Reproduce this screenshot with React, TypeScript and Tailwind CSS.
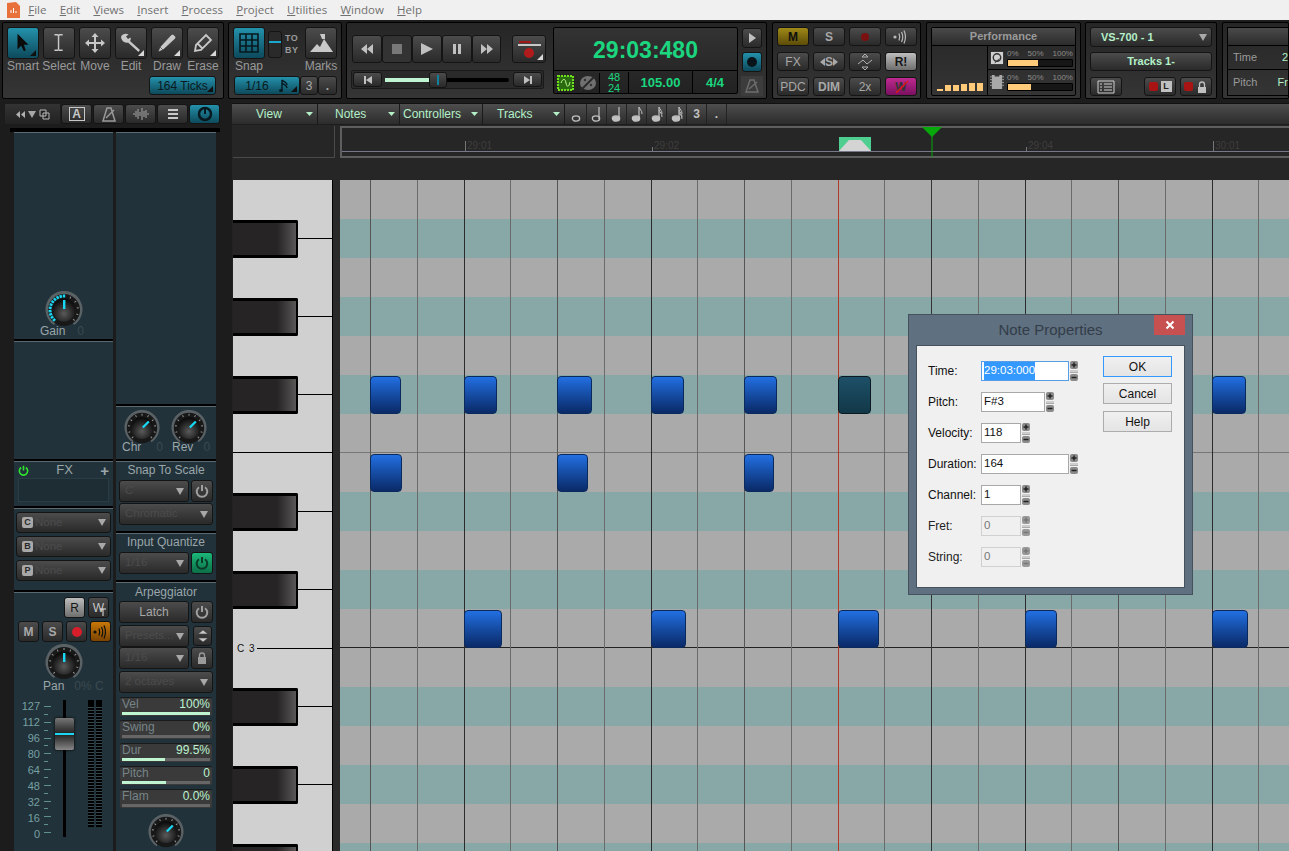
import React from "react";

type P = { className?: string; children?: React.ReactNode };

const Corner = ({ light }: { light?: boolean }) => (
  <svg className="absolute bottom-[2px] right-[2px]" width="6" height="6" viewBox="0 0 6 6">
    <path d="M6 0V6H0Z" fill={light ? "#d8d8d8" : "#101010"} />
  </svg>
);

const Btn = ({ className = "", children, v = "gray", between }: P & { v?: string; between?: boolean }) => {
  const look =
    v === "teal"
      ? "bg-gradient-to-b from-[#2492ac] to-[#0d4a5c] text-[#0a1a20]"
      : v === "flat"
      ? "bg-[#333333] text-[#9a9a9a]"
      : v === "gold"
      ? "bg-gradient-to-b from-[#a08a18] to-[#5c4c08] text-[#101010]"
      : v === "light"
      ? "bg-gradient-to-b from-[#bdbdbd] to-[#6f6f6f] text-[#161616]"
      : v === "pink"
      ? "bg-gradient-to-b from-[#c02a90] to-[#7a1060] text-[#333333]"
      : v === "green"
      ? "bg-gradient-to-b from-[#1cb878] to-[#0b7048] text-[#0a3a28]"
      : v === "orange"
      ? "bg-gradient-to-b from-[#c87808] to-[#7c4400] text-[#101010]"
      : "bg-gradient-to-b from-[#4c4c4c] to-[#2a2a2a] text-[#a8a8a8]";
  return (
    <div className={`relative flex shrink-0 items-center rounded-[3px] border border-[#141414] ${between ? "justify-between" : "justify-center"} ${look} ${className}`}>
      {children}
    </div>
  );
};

const Ico = ({ children, s = 24, vb = 24, className = "" }: P & { s?: number; vb?: number }) => (
  <svg width={s} height={s} viewBox={`0 0 ${vb} ${vb}`} className={className}>
    {children}
  </svg>
);

const Label = ({ children, className = "" }: P) => (
  <div className={`text-center text-[12px] leading-[14px] text-[#9a9a9a] ${className}`}>{children}</div>
);

const Tool = ({ label, v, corner, children }: { label: string; v?: string; corner?: boolean; children: React.ReactNode }) => (
  <div className="flex w-[36px] shrink-0 flex-col items-center">
    <Btn v={v} className="h-[32px] w-[32px]">
      {children}
      {corner && <Corner light={v !== "teal"} />}
    </Btn>
    <Label className="whitespace-nowrap">{label}</Label>
  </div>
);

const Panel = ({ className = "", children }: P) => (
  <div className={`shrink-0 rounded-[2px] border border-black bg-gradient-to-b from-[#262626] to-[#353535] ${className}`}>{children}</div>
);

const Chevron = ({ c = "#a8a8a8" }: { c?: string }) => (
  <svg width="8" height="7" viewBox="0 0 8 7">
    <path d="M0 0H8L4 7Z" fill={c} />
  </svg>
);

const Knob = ({ rot = 0, dots = false, size = 38 }: { rot?: number; dots?: boolean; size?: number }) => {
  const ticks = Array.from({ length: 11 }, (_, i) => -135 + i * 27);
  const lit = Array.from({ length: 11 }, (_, i) => -135 + i * 13.5);
  return (
    <svg width={size} height={size} viewBox="0 0 38 38" className="shrink-0">
      <defs>
        <radialGradient id="kb" cx="50%" cy="65%" r="60%">
          <stop offset="0%" stopColor="#5a5a5a" />
          <stop offset="60%" stopColor="#2a2a2a" />
          <stop offset="100%" stopColor="#0c0c0c" />
        </radialGradient>
      </defs>
      <path d="M9 34A18.5 18.5 0 1 1 29 34L26 29H12Z" fill="#5a6266" />
      <circle cx="19" cy="19" r="16" fill="#181818" />
      {ticks.map((a) => (
        <rect key={a} x="18.5" y="4" width="1" height="2" fill="#9a9a9a" transform={`rotate(${a} 19 19)`} />
      ))}
      {dots &&
        lit.map((a) => (
          <rect key={a} x="17.8" y="3.5" width="2.4" height="3" fill="#19d6f2" transform={`rotate(${a} 19 19)`} />
        ))}
      <circle cx="19" cy="19" r="11.5" fill="url(#kb)" />
      <rect x="18" y="9" width="2.4" height="9" fill="#19d6f2" transform={`rotate(${rot} 19 19)`} />
    </svg>
  );
};

const Section = ({ className = "", children }: P) => (
  <div className={`border-b-2 border-t border-b-black border-t-[#5b6a70] bg-[#22323a] ${className}`}>{children}</div>
);

const Drop = ({ text, className = "", c = "#4c4c4c", badge }: { text: string; className?: string; c?: string; badge?: string }) => (
  <Btn between className={`pl-[5px] pr-[4px] ${className}`}>
    <span className="flex items-center gap-[2px] whitespace-nowrap">
      {badge && <span className="flex h-[11px] w-[11px] shrink-0 items-center justify-center rounded-[2px] bg-[#a8a8a8] text-[9px] font-bold text-[#2a2a2a]">{badge}</span>}
      <span className="text-[11.5px]" style={{ color: c }}>{text}</span>
    </span>
    <span className="shrink-0"><Chevron /></span>
  </Btn>
);

const Power = ({ c = "#a0a0a0", s = 14 }: { c?: string; s?: number }) => (
  <svg width={s} height={s} viewBox="0 0 14 14" fill="none" stroke={c} strokeWidth="2">
    <path d="M4 3.2A5.3 5.3 0 1 0 10 3.2" />
    <path d="M7 1V7" />
  </svg>
);

const Broadcast = ({ c = "#b8b8b8" }: { c?: string }) => (
  <svg width="18" height="16" viewBox="0 0 18 16" fill="none" stroke={c} strokeWidth="1.2">
    <circle cx="3" cy="8" r="1.6" fill={c} stroke="none" />
    <path d="M7 4.5C8 7 8 9 7 11.5M9.5 3C11 6 11 10 9.5 13M12 1.5C14 6 14 10 12 14.5" />
  </svg>
);

const Row = ({ name, val, pct }: { name: string; val: string; pct: number }) => (
  <div className="flex h-[19px] w-[92px] flex-col justify-between rounded-[2px] border-t border-[#1a1a1a] bg-[#3a3a3a] px-[2px]">
    <div className="flex items-center justify-between text-[12px] leading-[13px]">
      <span className="text-[#768488]">{name}</span>
      <span className="text-[#bdf3d0]">{val}</span>
    </div>
    <div className="mb-[1px] h-[3px] bg-[#666666]">
      <div className="h-full bg-[#c0f5d2]" style={{ width: `${pct}%` }} />
    </div>
  </div>
);

const Note = ({ kind }: { kind: number }) => (
  <svg width="12" height="16" viewBox="0 0 12 16">
    {kind > 0 && <path d="M8 1V13" stroke="#c0c0c0" strokeWidth="1.2" />}
    <ellipse cx="5" cy="12.5" rx="3.6" ry="2.6" fill={kind >= 2 ? "#c0c0c0" : "none"} stroke="#c0c0c0" strokeWidth="1.4" />
    {kind >= 3 && <path d="M8 1C9 4 11 4 11 8" fill="none" stroke="#c0c0c0" />}
    {kind >= 4 && <path d="M8 4C9 7 11 7 11 11" fill="none" stroke="#c0c0c0" />}
    {kind >= 5 && <path d="M8 6.5C9 9 11 9 11 13" fill="none" stroke="#c0c0c0" />}
  </svg>
);

const Toolbar = () => (
  <div className="flex h-[80px] gap-[4px] bg-[#1d1d1d] pl-[2px] pt-[2px]">
    <Panel className="h-[77px] w-[222px] px-[2px] pt-[4px]">
      <div className="flex">
        <Tool label="Smart" v="teal" corner>
          <Ico s={22}><path d="M6 2V19L10 15L13 21L15 20L13 14H18Z" fill="#0b0b0b" /></Ico>
        </Tool>
        <Tool label="Select">
          <Ico s={22}><path d="M7 3H10.5L11.5 4L12.5 3H16M7 20H10.5L11.5 19L12.5 20H16M11.5 4V19" stroke="#c8c8c8" strokeWidth="1.6" fill="none" /></Ico>
        </Tool>
        <Tool label="Move">
          <Ico s={24}><path d="M12 2L15.5 6H13V11H18V8.5L22 12L18 15.5V13H13V18H15.5L12 22L8.5 18H11V13H6V15.5L2 12L6 8.5V11H11V6H8.5Z" fill="#c8c8c8" /></Ico>
        </Tool>
        <Tool label="Edit" corner>
          <Ico s={24}><path d="M2 6C3 3 7 2 9.5 3.5L7 5.5L9 8L11.5 6.5C12 8 11.8 9 11 10L21 19L19.5 21L9 11.5C6 12.5 2.5 10 2 6Z" fill="#c8c8c8" /></Ico>
        </Tool>
        <Tool label="Draw" corner>
          <Ico s={24}><path d="M3 21L5 16L16 4C17 3 18 3 19 4L20 5C21 6 21 7 20 8L8 19ZM5 16L8 19" fill="#c8c8c8" stroke="#2a2a2a" strokeWidth="0.6" /></Ico>
        </Tool>
        <Tool label="Erase" corner>
          <Ico s={24}><path d="M4 20L5 14L15 4L20 9L10 19ZM7 13L11 17" fill="none" stroke="#c8c8c8" strokeWidth="1.8" /></Ico>
        </Tool>
      </div>
      <div className="mt-[3px] flex justify-end pr-[5px]">
        <Btn v="teal" className="h-[19px] w-[67px] text-[12px]">
          164 Ticks
          <Corner />
        </Btn>
      </div>
    </Panel>
    <Panel className="h-[77px] w-[114px] px-[4px] pt-[4px]">
      <div className="flex">
        <div className="flex w-[32px] flex-col items-center">
          <Btn v="teal" className="h-[32px] w-[32px]">
            <Ico s={22} vb={22}><path d="M2 2H20V20H2ZM8 2V20M14 2V20M2 8H20M2 14H20" fill="none" stroke="#07181e" strokeWidth="1.6" /></Ico>
          </Btn>
          <Label>Snap</Label>
        </div>
        <div className="ml-[3px] mt-[4px] flex h-[27px] w-[14px] flex-col overflow-hidden rounded-[3px] border border-[#141414] bg-[#2a2a2a] pt-[9px]">
          <div className="h-[2px] bg-[#18a8d0]" />
        </div>
        <div className="ml-[3px] mt-[6px] flex w-[20px] flex-col gap-[2px] text-[9px] font-bold leading-[10px] tracking-[0.5px] text-[#9a9a9a]">
          <span>TO</span>
          <span>BY</span>
        </div>
        <div className="flex w-[32px] flex-col items-center">
          <Btn className="h-[32px] w-[32px]">
            <Ico s={28} vb={28}><path d="M3 23L10 15L13 18L17 10L26 23Z" fill="#c8c8c8" /><path d="M13 5H18V10H15Z" fill="#c8c8c8" /></Ico>
          </Btn>
          <Label>Marks</Label>
        </div>
      </div>
      <div className="mt-[3px] flex pl-[1px]">
        <Btn v="teal" className="h-[19px] w-[66px] gap-[10px] text-[12px]">
          1/16
          <svg width="10" height="14" viewBox="0 0 10 14"><path d="M3 1V11M3 1C5 3 8 3 8 6M3 4C5 6 8 6 8 9" fill="none" stroke="#07181e" strokeWidth="1.4" /><ellipse cx="2" cy="11.5" rx="2" ry="1.6" fill="#07181e" /></svg>
          <Corner />
        </Btn>
        <Btn className="h-[19px] w-[18px] text-[12px]">3</Btn>
        <Btn className="h-[19px] w-[19px] text-[12px] font-bold">.</Btn>
      </div>
    </Panel>
    <Panel className="flex h-[77px] w-[421px] pl-[5px] pt-[4px]">
      <div className="w-[197px]">
        <div className="mt-[8px] flex">
          <Btn className="h-[28px] w-[30px]"><Ico s={14} vb={14}><path d="M7 2V12L1 7ZM13 2V12L7 7Z" fill="#c0c0c0" /></Ico></Btn>
          <Btn v="flat" className="h-[28px] w-[30px]"><div className="h-[10px] w-[10px] bg-[#787878]" /></Btn>
          <Btn className="h-[28px] w-[30px]"><Ico s={16} vb={16}><path d="M2 2L14 8L2 14Z" fill="#c0c0c0" /></Ico></Btn>
          <Btn className="h-[28px] w-[30px]"><Ico s={14} vb={14}><path d="M3 2H6V12H3ZM8 2H11V12H8Z" fill="#c0c0c0" /></Ico></Btn>
          <Btn className="h-[28px] w-[29px]"><Ico s={14} vb={14}><path d="M1 2L7 7L1 12ZM7 2L13 7L7 12Z" fill="#c0c0c0" /></Ico></Btn>
          <Btn className="ml-[11px] h-[28px] w-[34px] flex-col">
            <div className="mb-[1px] mr-[9px] h-[2px] w-[12px] bg-[#a01818]" />
            <div className="mb-[2px] h-[2px] w-[23px] bg-[#c8c8c8]" />
            <div className="h-[10px] w-[10px] rounded-full bg-[#b01c1c]" />
            <Corner light />
          </Btn>
        </div>
        <div className="ml-[-1px] mt-[7px] flex h-[19px] w-[193px] items-center rounded-[2px] border border-[#1a1a1a] bg-[#2a2a2a] px-[1px]">
          <Btn className="h-[15px] w-[29px]"><Ico s={10} vb={10}><path d="M1 1H3V9H1ZM9 1V9L3 5Z" fill="#c0c0c0" /></Ico></Btn>
          <div className="ml-[3px] flex h-[4px] w-[124px] items-center rounded-full bg-black">
            <div className="h-full w-[44px] bg-[#bff5d2]" />
            <Btn className="h-[16px] w-[18px]"><div className="h-[10px] w-[2px] bg-[#10809c]" /></Btn>
          </div>
          <Btn className="ml-[4px] h-[15px] w-[29px]"><Ico s={10} vb={10}><path d="M1 1V9L7 5ZM7 1H9V9H7Z" fill="#c0c0c0" /></Ico></Btn>
        </div>
      </div>
      <div className="ml-[4px] h-[67px] w-[185px] shrink-0 rounded-[2px] border border-black bg-gradient-to-b from-[#333333] to-[#222222] text-[#1bd67f]">
        <div className="flex h-[42px] items-center justify-center pt-[2px] text-[23px] font-bold leading-none">29:03:480</div>
        <div className="flex h-[24px] items-center border-t border-black">
          <div className="flex w-[46px] items-center justify-center gap-[2px] border-r border-black">
            <Ico s={20} vb={20}><rect x="2" y="3" width="15" height="14" fill="#2a6a10" stroke="#6fe01c" strokeWidth="2" strokeDasharray="2 1" /><path d="M5 10C7 5 9 5 10 10S13 14 14 9" fill="none" stroke="#c0ff90" /></Ico>
            <Ico s={20} vb={20}><ellipse cx="10" cy="10" rx="8" ry="7" fill="#707070" /><path d="M2 18L18 2" stroke="#2a2a2a" strokeWidth="2" /><circle cx="7" cy="7" r="1.2" fill="#333" /><circle cx="13" cy="12" r="1.2" fill="#333" /></Ico>
          </div>
          <div className="flex w-[29px] flex-col items-center border-r border-black text-[11px] leading-[11px]">
            <span>48</span>
            <span>24</span>
          </div>
          <div className="flex h-[23px] w-[64px] items-center justify-center border-r border-black text-[13px] font-bold">105.00</div>
          <div className="flex flex-1 items-center justify-center text-[13px] font-bold">4/4</div>
        </div>
      </div>
      <div className="ml-[4px] flex w-[20px] shrink-0 flex-col items-center gap-[4px] pt-[1px]">
        <Btn className="h-[20px] w-[20px]"><Ico s={10} vb={10}><path d="M2 0L9 5L2 10Z" fill="#c0c0c0" /></Ico></Btn>
        <Btn v="teal" className="h-[20px] w-[20px]"><div className="h-[10px] w-[10px] rounded-full bg-[#08141a]" /></Btn>
        <div className="flex h-[20px] w-[22px] shrink-0 items-center justify-center bg-[#3c3c3c]">
          <Ico s={16} vb={16}><path d="M2 14L6 2H10L14 14ZM5 11L13 4" fill="none" stroke="#6c6c6c" strokeWidth="1.5" /></Ico>
        </div>
      </div>
    </Panel>
    <Panel className="ml-[1px] grid h-[77px] w-[149px] grid-cols-[repeat(4,32px)] content-start gap-x-[4px] gap-y-[6px] px-[4px] pt-[4px] text-[12px]">
      <Btn v="gold" className="h-[19px] w-[32px] font-bold">M</Btn>
      <Btn className="h-[19px] w-[32px] font-bold">S</Btn>
      <Btn className="h-[19px] w-[32px]"><div className="h-[8px] w-[8px] rounded-full bg-[#7a1010]" /></Btn>
      <Btn className="h-[19px] w-[32px]"><Broadcast /></Btn>
      <Btn className="h-[19px] w-[32px]">FX</Btn>
      <Btn className="h-[19px] w-[32px] font-bold">
        <svg width="5" height="8" viewBox="0 0 5 8"><path d="M5 0V8L0 4Z" fill="#a8a8a8" /></svg>S<svg width="5" height="8" viewBox="0 0 5 8"><path d="M0 0V8L5 4Z" fill="#a8a8a8" /></svg>
      </Btn>
      <Btn className="h-[19px] w-[32px]">
        <Ico s={16} vb={16}><path d="M8 0L11 3H5ZM8 16L11 13H5ZM1 10L6 6L10 10L15 6" fill="none" stroke="#b0b0b0" /></Ico>
      </Btn>
      <Btn v="light" className="h-[19px] w-[32px] font-bold">R!</Btn>
      <Btn className="h-[19px] w-[32px]">PDC</Btn>
      <Btn className="h-[19px] w-[32px] font-bold">DIM</Btn>
      <Btn className="h-[19px] w-[32px]">2x</Btn>
      <Btn v="pink" className="h-[19px] w-[32px] font-bold">
        W
        <svg className="absolute left-[9px] top-[2px]" width="14" height="14" viewBox="0 0 14 14"><path d="M1 13L13 1" stroke="#e01818" strokeWidth="1.5" /></svg>
      </Btn>
    </Panel>
    <Panel className="ml-[1px] h-[77px] w-[155px] px-[4px] pt-[4px]">
      <div className="h-[69px] rounded-[2px] border border-black">
        <div className="flex h-[18px] items-center justify-center border-b border-black bg-gradient-to-b from-[#4a4a4a] to-[#2c2c2c] text-[11px] font-bold text-[#9a9a9a]">Performance</div>
        <div className="flex h-[49px]">
          <div className="flex w-[56px] shrink-0 items-end justify-center gap-[2px] border-r border-black pb-[4px]">
            <div className="h-[2px] w-[6px] bg-[#ffca7a]" />
            <div className="h-[6px] w-[6px] bg-[#ffca7a]" />
            <div className="h-[6px] w-[6px] bg-[#ffca7a]" />
            <div className="h-[7px] w-[6px] bg-[#ffca7a]" />
            <div className="h-[8px] w-[6px] bg-[#ffca7a]" />
            <div className="h-[8px] w-[6px] bg-[#ffca7a]" />
          </div>
          <div className="flex flex-1 flex-col">
            <div className="flex h-[24px] items-center border-b border-black pl-[2px]">
              <Ico s={14} vb={15} className="shrink-0"><rect x="1" y="1" width="13" height="13" fill="#d0d0d0" /><circle cx="7.5" cy="7" r="4" fill="none" stroke="#333" strokeWidth="1.5" /><path d="M5 13L10 8" stroke="#333" /></Ico>
              <div className="ml-[3px] w-[66px]">
                <div className="flex justify-between text-[8px] leading-[10px] text-[#8a8a8a]"><span>0%</span><span>50%</span><span>100%</span></div>
                <div className="h-[8px] rounded-[1px] border border-black bg-[#161616]"><div className="h-full w-[47%] bg-[#ffca7a]" /></div>
              </div>
            </div>
            <div className="flex h-[24px] items-center pl-[2px]">
              <Ico s={14} vb={15} className="shrink-0"><path d="M2 0H5V1.5H10V0H13V15H2Z" fill="#a8a8a8" /><path d="M0 2H2M0 5H2M0 8H2M0 11H2M13 2H15M13 5H15M13 8H15M13 11H15" stroke="#a8a8a8" /></Ico>
              <div className="ml-[3px] w-[66px]">
                <div className="flex justify-between text-[8px] leading-[10px] text-[#8a8a8a]"><span>0%</span><span>50%</span><span>100%</span></div>
                <div className="h-[8px] rounded-[1px] border border-black bg-[#161616]"><div className="h-full w-[36%] bg-[#ffca7a]" /></div>
              </div>
            </div>
          </div>
        </div>
      </div>
    </Panel>
    <Panel className="h-[77px] w-[132px] px-[4px] pt-[4px] text-[#b4f0c8]">
      <Btn between className="h-[20px] w-[122px] pl-[10px] pr-[4px]">
        <span className="text-[11px] font-bold text-[#b4f0c8]">VS-700 - 1</span>
        <Chevron />
      </Btn>
      <Btn className="mt-[5px] h-[19px] w-[122px]"><span className="text-[11px] font-bold text-[#b4f0c8]">Tracks 1-</span></Btn>
      <div className="mt-[6px] flex">
        <Btn className="h-[19px] w-[32px]">
          <Ico s={18} vb={18}><path d="M1 3H17V15H1ZM3 6H5M7 6H15M3 9H5M7 9H15M3 12H5M7 12H15" fill="none" stroke="#d0d0d0" /></Ico>
        </Btn>
        <Btn className="ml-[22px] h-[19px] w-[32px] gap-[3px]">
          <div className="h-[9px] w-[9px] rounded-[2px] border-y-[2px] border-[#a81414] bg-[#a81414]" />
          <span className="flex h-[11px] w-[11px] items-center justify-center bg-[#c0c0c0] text-[9px] font-bold text-[#222]">L</span>
        </Btn>
        <Btn className="ml-[4px] h-[19px] w-[32px] gap-[3px]">
          <div className="h-[9px] w-[9px] rounded-[2px] border-y-[2px] border-[#a81414] bg-[#a81414]" />
          <Ico s={12} vb={12}><path d="M3.5 6V3.5A2.5 2.5 0 0 1 8.5 3.5V6" fill="none" stroke="#c0c0c0" strokeWidth="1.3" /><path d="M2 6H10V12H2Z" fill="#c0c0c0" /></Ico>
        </Btn>
      </div>
    </Panel>
    <Panel className="ml-[1px] h-[77px] flex-1 pl-[4px] pt-[4px]">
      <div className="h-[69px] border border-r-0 border-black text-[11px] text-[#9a9a9a]">
        <div className="h-[18px] border-b border-black bg-gradient-to-b from-[#4a4a4a] to-[#2c2c2c]" />
        <div className="flex h-[24px] items-center justify-between border-b border-black pl-[5px]"><span>Time</span><span className="text-[#b4f0c8]">2</span></div>
        <div className="flex h-[24px] items-center justify-between pl-[5px]"><span>Pitch</span><span className="text-[#b4f0c8]">Fr</span></div>
      </div>
    </Panel>
  </div>
);

const LeftPanel = () => (
  <div className="flex w-[232px] shrink-0 flex-col bg-[#1c1c1c]">
    <div className="ml-[5px] mt-[4px] flex h-[20px] w-[216px] gap-[1px]">
      <div className="flex w-[55px] items-center justify-center gap-[3px] bg-gradient-to-b from-[#333] to-[#222] text-[#b0b0b0]">
        <Ico s={9} vb={9}><path d="M4 1V8L0 4.5ZM9 1V8L5 4.5Z" fill="#b0b0b0" /></Ico>
        <Chevron />
        <Ico s={11} vb={11}><path d="M1 1H7V7H1ZM4 4H10V10H4Z" fill="#222" stroke="#b8b8b8" /></Ico>
      </div>
      <Btn className="h-[20px] w-[31px]"><div className="flex h-[14px] w-[16px] items-center justify-center border border-[#c8c8c8] text-[12px] font-bold leading-none text-[#c8c8c8]">A</div></Btn>
      <Btn className="h-[20px] w-[31px]"><Ico s={16} vb={16}><path d="M2 15L6 2H10L14 15ZM5 12L13 4" fill="none" stroke="#9a9a9a" strokeWidth="1.5" /></Ico></Btn>
      <Btn className="h-[20px] w-[31px]"><Ico s={18} vb={18}><path d="M1 9H3M4 6V12M6 4V14M8 7V11M10 3V15M12 6V12M14 5V13M16 8V10" stroke="#a8a8a8" /></Ico></Btn>
      <Btn className="h-[20px] w-[31px]"><Ico s={12} vb={12}><path d="M1 2H11M1 6H11M1 10H11" stroke="#c8c8c8" strokeWidth="1.8" /></Ico></Btn>
      <Btn v="teal" className="h-[20px] w-[31px]"><Ico s={16} vb={16}><circle cx="8" cy="8" r="6" fill="none" stroke="#07181e" strokeWidth="2.5" /><path d="M8 2V8" stroke="#07181e" strokeWidth="2" /></Ico></Btn>
    </div>
    <div className="ml-[10px] mt-[4px] h-[4px] w-[210px] bg-black" />
    <div className="ml-[14px] flex flex-1 gap-[3px] overflow-hidden">
      <div className="flex w-[99px] shrink-0 flex-col text-[#9aa6aa]">
        <Section className="flex h-[209px] flex-col items-center justify-end pb-[1px]">
          <Knob dots />
          <div className="mt-[-5px] flex w-[99px] items-center pl-[26px] text-[12px] leading-[14px]">
            Gain<span className="ml-[12px] text-[#3a4a50]">0</span>
          </div>
        </Section>
        <Section className="h-[120px]" />
        <Section className="h-[47px] px-[4px]">
          <div className="flex h-[16px] items-center justify-between">
            <Power c="#2ee82e" s={11} />
            <span className="text-[13px]">FX</span>
            <span className="text-[15px] font-bold leading-none">+</span>
          </div>
          <div className="h-[24px] border border-[#2a3c44] bg-[#1e2c33]" />
        </Section>
        <Section className="flex h-[84px] flex-col items-center gap-[3px] pt-[3px]">
          <Drop text="None" badge="C" className="h-[21px] w-[95px]" />
          <Drop text="None" badge="B" className="h-[21px] w-[95px]" />
          <Drop text="None" badge="P" className="h-[21px] w-[95px]" />
        </Section>
        <div className="flex-1 border-t border-t-[#5b6a70] bg-[#22323a] px-[3px] pt-[4px]">
          <div className="flex justify-end gap-[3px] pr-[1px]">
            <Btn v="light" className="h-[21px] w-[21px] text-[12px]">R</Btn>
            <Btn className="h-[21px] w-[21px] text-[12px] text-[#c8c8c8]">
              W
              <svg className="absolute bottom-[1px] right-[1px]" width="8" height="8" viewBox="0 0 8 8"><path d="M1 1H7M4 1V8" stroke="#e8e8e8" /></svg>
            </Btn>
          </div>
          <div className="mt-[3px] flex gap-[3px] pl-[1px]">
            <Btn className="h-[21px] w-[21px] text-[12px] font-bold">M</Btn>
            <Btn className="h-[21px] w-[21px] text-[12px] font-bold">S</Btn>
            <Btn className="h-[21px] w-[21px]"><div className="h-[10px] w-[10px] rounded-full bg-[#d81e2a]" /></Btn>
            <Btn v="orange" className="h-[21px] w-[21px]"><Broadcast c="#101010" /></Btn>
          </div>
          <div className="mt-[2px] flex justify-center"><Knob /></div>
          <div className="mt-[-3px] flex items-center pl-[26px] text-[12px] leading-[14px]">
            Pan<span className="ml-[10px] text-[#3a4a50]">0% C</span>
          </div>
          <div className="mt-[7px] flex h-[140px]">
            <div className="mt-[-2px] flex w-[23px] flex-col items-end text-[11px] leading-[16px] text-[#75a0a4]">
              {["127", "112", "96", "80", "64", "48", "32", "16", "0"].map((n) => (
                <span key={n}>{n}</span>
              ))}
            </div>
            <div className="ml-[4px] mt-[6px] flex w-[7px] flex-col">
              {Array.from({ length: 17 }, (_, i) => (
                <div key={i} className="h-[8px]"><div className={`h-px bg-[#5e9092] ${i % 2 ? "w-[4px]" : "w-[7px]"}`} /></div>
              ))}
            </div>
            <div className="relative ml-[3px] flex w-[20px] justify-center">
              <div className="mb-[3px] w-[3px] bg-black" />
              <div className="absolute top-[18px] flex h-[32px] w-[19px] flex-col justify-center rounded-[2px] bg-gradient-to-b from-[#777] via-[#222] to-[#888] shadow-[0_0_3px_#000]">
                <div className="h-[2px] bg-[#19d6f2]" />
              </div>
            </div>
            <div className="ml-[14px] flex h-[127px] gap-[2px]">
              <div className="w-[6px] border-t-[5px] border-black bg-[repeating-linear-gradient(to_bottom,#000_0_2px,#33474d_2px_3px)]" />
              <div className="w-[6px] border-t-[5px] border-black bg-[repeating-linear-gradient(to_bottom,#000_0_2px,#33474d_2px_3px)]" />
            </div>
          </div>
        </div>
      </div>
      <div className="flex w-[100px] shrink-0 flex-col text-[#9aa6aa]">
        <Section className="h-[274px]" />
        <Section className="h-[55px] pt-[3px]">
          <div className="flex pl-[8px]">
            <Knob rot={45} size={36} />
            <div className="ml-[11px]"><Knob rot={45} size={36} /></div>
          </div>
          <div className="mt-[-6px] flex px-[6px] text-[12px] leading-[14px]">
            <span>Chr</span>
            <span className="ml-[15px] text-[#3a4a50]">0</span>
            <span className="ml-[9px]">Rev</span>
            <span className="ml-[10px] text-[#3a4a50]">0</span>
          </div>
        </Section>
        <Section className="h-[72px] px-[3px]">
          <div className="text-center text-[12px] leading-[16px]">Snap To Scale</div>
          <div className="mt-[2px] flex gap-[2px]">
            <Drop text="C" className="h-[22px] w-[70px]" />
            <Btn className="h-[22px] w-[22px]"><Power /></Btn>
          </div>
          <div className="mt-[1px]"><Drop text="Chromatic" className="h-[22px] w-[94px]" /></div>
        </Section>
        <Section className="h-[49px] px-[3px]">
          <div className="text-center text-[12px] leading-[16px]">Input Quantize</div>
          <div className="mt-[2px] flex gap-[2px]">
            <Drop text="1/16" className="h-[22px] w-[70px]" />
            <Btn v="green" className="h-[22px] w-[22px]"><Power c="#0a3a28" /></Btn>
          </div>
        </Section>
        <div className="flex-1 border-t border-t-[#5b6a70] bg-[#22323a] px-[3px] pt-[1px]">
          <div className="text-center text-[12px] leading-[16px]">Arpeggiator</div>
          <div className="mt-[1px] flex gap-[2px]">
            <Btn className="h-[22px] w-[70px] text-[12px]">Latch</Btn>
            <Btn className="h-[22px] w-[22px]"><Power /></Btn>
          </div>
          <div className="mt-[2px] flex gap-[2px]">
            <Drop text="Presets..." className="h-[22px] w-[70px]" />
            <Btn className="ml-[2px] mt-[1px] h-[20px] w-[19px]"><Ico s={14} vb={14}><path d="M7 1L12 5H2ZM7 13L12 9H2ZM1 7H13" fill="#c8c8c8" stroke="#333" strokeWidth="0.5" /></Ico></Btn>
          </div>
          <div className="flex gap-[2px]">
            <Drop text="1/16" className="h-[22px] w-[70px]" />
            <Btn className="h-[22px] w-[22px]"><Ico s={12} vb={12}><path d="M3.5 5V3.5A2.5 2.5 0 0 1 8.5 3.5V5" fill="none" stroke="#9a9a9a" strokeWidth="1.3" /><path d="M2 5H10V12H2Z" fill="#9a9a9a" /></Ico></Btn>
          </div>
          <div className="mt-[2px]"><Drop text="2 octaves" className="h-[22px] w-[94px]" /></div>
          <div className="ml-[1px] mt-[4px] flex flex-col gap-[4px]">
            <Row name="Vel" val="100%" pct={100} />
            <Row name="Swing" val="0%" pct={0} />
            <Row name="Dur" val="99.5%" pct={49} />
            <Row name="Pitch" val="0" pct={50} />
            <Row name="Flam" val="0.0%" pct={0} />
          </div>
          <div className="mt-[6px] flex justify-center"><Knob rot={45} size={36} /></div>
        </div>
      </div>
    </div>
  </div>
);

const BLACK = [1, 3, 5, 8, 10, 13, 15, 17];
const ROWS = Array.from({ length: 18 }, (_, i) => i);
const LINES = Array.from({ length: 21 }, (_, i) => i);
const NOTES: [number, number, number, boolean?][] = [
  [30, 196, 31], [124, 196, 33], [217, 196, 35], [311, 196, 33], [404, 196, 33], [498, 196, 33, true], [872, 196, 34],
  [30, 274, 32], [217, 274, 31], [404, 274, 30],
  [124, 430, 38], [311, 430, 35], [498, 430, 41], [685, 430, 32], [872, 430, 36],
];

const Ruler = () => (
  <div className="flex h-[55px] shrink-0 bg-[#262626]">
    <div className="ml-[1px] mt-[1px] h-[32px] w-[102px] border-b border-r border-[#4a4a4a]" />
    <div className="relative ml-[5px] mt-[1px] h-[32px] flex-1 border-b-2 border-l-2 border-t-2 border-[#5e5e5e]">
      <div className="absolute left-0 right-0 top-[23px] h-px bg-[#77778a]" />
      {[
        ["29:01", 123, 10],
        ["29:02", 310, 4],
        ["29:04", 684, 4],
        ["30:01", 871, 10],
      ].map(([t, x, h]) => (
        <React.Fragment key={t as string}>
          <div className="absolute w-px bg-[#777]" style={{ left: x as number, top: 23 - (h as number), height: h as number }} />
          <span className="absolute text-[10px] leading-[12px] text-[#3e3e3e]" style={{ left: (x as number) + 2, top: 12 }}>{t}</span>
        </React.Fragment>
      ))}
      <div className="absolute left-[497px] top-[9px] flex h-[14px] w-[32px] items-end bg-[#4fcf8f]">
        <svg width="32" height="14" viewBox="0 0 32 14"><path d="M0 14L10 3H22L32 14Z" fill="#d4d4d4" /></svg>
      </div>
      <svg className="absolute left-[580px] top-[-1px]" width="20" height="30" viewBox="0 0 20 30">
        <path d="M0 0H20L10 10Z" fill="#06a80a" />
        <path d="M10 9V30" stroke="#06a80a" />
      </svg>
    </div>
  </div>
);

const Piano = () => (
  <div className="flex w-[108px] shrink-0 border-l border-r-[7px] border-l-[#222] border-r-[#2a2a2a] bg-[#d0d0d0]">
    <div className="w-[100px] shrink-0 border-r border-black">
      {ROWS.map((i) => (
        <div key={i} className={`relative flex h-[39px] items-center ${i === 6 ? "border-b border-black" : ""}`}>
          {BLACK.includes(i) && (
            <>
              <div className="h-[38px] w-[65px] shrink-0 rounded-r-[2px] border-y-[3px] border-r-[2px] border-black bg-gradient-to-r from-[#262424] from-[70%] to-[#5a5857]" />
              <div className="h-px flex-1 bg-black" />
            </>
          )}
          {i === 11 && (
            <div className="absolute bottom-[-8px] left-0 right-0 z-10 flex h-[16px] items-center pl-[4px] text-[10px] tracking-[1px] text-[#111]">
              <span>C 3</span>
              <div className="ml-[1px] h-px flex-1 bg-black" />
            </div>
          )}
        </div>
      ))}
    </div>
  </div>
);

const Grid = () => (
  <div className="relative flex-1 overflow-hidden">
    {ROWS.map((i) => (
      <div key={i} className={`h-[39px] ${BLACK.includes(i) ? "bg-[#88a7a7]" : "bg-[#aaaaaa]"} ${i === 6 ? "border-b border-[#777]" : ""} ${i === 11 ? "border-b border-[#222]" : ""}`} />
    ))}
    {LINES.map((i) => {
      const strong = i % 4 === 2;
      const beat = i % 2 === 0;
      const color = i === 10 ? "#b03a2a" : i === 12 ? "#333333" : strong ? "#2c2c2c" : beat ? "#555555" : "#6b6b6b";
      return <div key={i} className="absolute bottom-0 top-0 w-px" style={{ left: Math.round(30 + i * 46.75), background: color }} />;
    })}
    {NOTES.map(([x, y, w, sel], i) => (
      <div
        key={i}
        className={`absolute h-[38px] rounded-[4px] border ${sel ? "border-[#0b1a22] bg-gradient-to-b from-[#1d5068] to-[#123848]" : "border-[#0a2a5e] bg-gradient-to-b from-[#2270e2] to-[#0a2a68]"}`}
        style={{ left: x, top: y, width: w }}
      />
    ))}
  </div>
);

const Spin = ({ off }: { off?: boolean }) => (
  <svg width="9" height="21" viewBox="0 0 9 21" className="ml-[1px] shrink-0">
    <rect x="0" y="0" width="8" height="8" rx="2" fill={off ? "#9a9a9a" : "#8a8a8a"} />
    <path d="M1.5 4H6.5M4 1.5V6.5" stroke={off ? "#777" : "#222"} strokeWidth="1.5" />
    <path d="M0 10H8M0 11.5H8" stroke="#aaa" />
    <rect x="0" y="13" width="8" height="7" rx="2" fill={off ? "#9a9a9a" : "#8a8a8a"} />
    <path d="M1.5 16.5H6.5" stroke={off ? "#777" : "#222"} strokeWidth="1.5" />
  </svg>
);

const Field = ({ label, value, w, off, sel }: { label: string; value: string; w: string; off?: boolean; sel?: boolean }) => (
  <div className="flex h-[20px] items-center">
    <span className={`w-[53px] shrink-0 text-[12px] ${off ? "text-[#222]" : "text-[#111]"}`}>{label}</span>
    <div className={`flex h-[20px] items-center border pl-[2px] text-[11.5px] ${w} ${sel ? "border-[#569de5] bg-white" : off ? "border-[#d0d0d0] bg-[#f0f0f0] text-[#777]" : "border-[#a8a8a8] bg-white text-[#111]"}`}>
      <span className={sel ? "bg-[#3399ff] text-white" : ""}>{value}</span>
    </div>
    <Spin off={off} />
  </div>
);

const Dialog = () => (
  <div className="absolute left-[908px] top-[314px] z-20 h-[281px] w-[285px] border border-[#45525e] bg-[#5f7080] px-[7px] pb-[7px]">
    <div className="relative flex h-[30px] items-center justify-center text-[15px] text-[#333d48]">
      Note Properties
      <div className="absolute right-0 top-0 flex h-[20px] w-[31px] items-center justify-center bg-[#c75050]">
        <svg width="10" height="10" viewBox="0 0 10 10"><path d="M1.5 1.5L8.5 8.5M8.5 1.5L1.5 8.5" stroke="#fff" strokeWidth="2" /></svg>
      </div>
    </div>
    <div className="flex h-[243px] border border-[#45525e] bg-[#f0f0f0] pl-[11px] pt-[15px]">
      <div className="flex w-[175px] flex-col gap-[11px]">
        <Field label="Time:" value="29:03:000" w="w-[88px]" sel />
        <Field label="Pitch:" value="F#3" w="w-[64px]" />
        <Field label="Velocity:" value="118" w="w-[40px]" />
        <Field label="Duration:" value="164" w="w-[88px]" />
        <Field label="Channel:" value="1" w="w-[40px]" />
        <Field label="Fret:" value="0" w="w-[40px]" off />
        <Field label="String:" value="0" w="w-[40px]" off />
      </div>
      <div className="flex flex-col">
        <div className="mt-[-5px] flex h-[21px] w-[69px] items-center justify-center border border-[#3399ff] bg-gradient-to-b from-[#f0f0f0] to-[#e4e4e4] text-[12px] text-[#111]">OK</div>
        <div className="mt-[6px] flex h-[21px] w-[69px] items-center justify-center border border-[#acacac] bg-gradient-to-b from-[#f0f0f0] to-[#e4e4e4] text-[12px] text-[#111]">Cancel</div>
        <div className="mt-[7px] flex h-[21px] w-[69px] items-center justify-center border border-[#acacac] bg-gradient-to-b from-[#f0f0f0] to-[#e4e4e4] text-[12px] text-[#111]">Help</div>
      </div>
    </div>
  </div>
);

const NoteStrip = () => (
  <div className="ml-[2px] flex flex-1">
    {[0, 1, 2, 3, 4, 5].map((k) => (
      <div key={k} className="flex h-[20px] w-[20px] items-center justify-center border-r border-[#222]"><Note kind={k} /></div>
    ))}
    <div className="flex h-[20px] w-[20px] items-center justify-center border-r border-[#222] text-[12px] font-bold text-[#c0c0c0]">3</div>
    <div className="flex h-[20px] w-[20px] items-center justify-center border-r border-[#222] text-[12px] font-bold text-[#c0c0c0]">.</div>
  </div>
);

const StripMenu = ({ t, w, pad }: { t: string; w: string; pad: string }) => (
  <div className={`flex h-[20px] shrink-0 items-center justify-between border-r border-[#1a1a1a] pr-[4px] ${w} ${pad}`}>
    <span className="text-[12px] text-[#b4f0c8]">{t}</span>
    <svg width="7" height="4" viewBox="0 0 7 4"><path d="M0 0H7L3.5 4Z" fill="#b4f0c8" /></svg>
  </div>
);

export default function App() {
  return (
    <div className="relative flex h-[851px] w-full flex-col overflow-hidden bg-[#1d1d1d] font-['Liberation_Sans',Arial,sans-serif]">
      <div className="flex h-[20px] shrink-0 items-center gap-[13.25px] bg-[#f0f0f0] pb-[1px] pl-[7px] font-['Open_Sans',sans-serif] text-[11.5px] text-[#707070]">
        <svg width="13" height="16" viewBox="0 0 13 16" className="mr-[-5px]">
          <path d="M0 1L9 0L13 4V16H0Z" fill="#e8703a" />
          <path d="M4 11V8M6.5 11V6M9 11V9" stroke="#fff" />
        </svg>
        {["File", "Edit", "Views", "Insert", "Process", "Project", "Utilities", "Window", "Help"].map((m) => (
          <span key={m}>
            <span className="underline">{m[0]}</span>
            {m.slice(1)}
          </span>
        ))}
      </div>
      <Toolbar />
      <div className="flex min-h-0 flex-1">
        <LeftPanel />
        <div className="flex min-w-0 flex-1 flex-col">
          <div className="mt-[3px] flex h-[21px] shrink-0 border-t border-[#111] bg-gradient-to-b from-[#4e4e4e] to-[#2c2c2c] pl-[6px]">
            <StripMenu t="View" w="w-[80px]" pad="pl-[18px]" />
            <StripMenu t="Notes" w="w-[82px]" pad="pl-[17px]" />
            <StripMenu t="Controllers" w="w-[83px]" pad="pl-[3px]" />
            <StripMenu t="Tracks" w="w-[82px]" pad="pl-[14px]" />
            <NoteStrip />
          </div>
          <div className="mt-[1px]"><Ruler /></div>
          <div className="flex min-h-0 flex-1">
            <Piano />
            <Grid />
          </div>
        </div>
      </div>
      <Dialog />
    </div>
  );
}
